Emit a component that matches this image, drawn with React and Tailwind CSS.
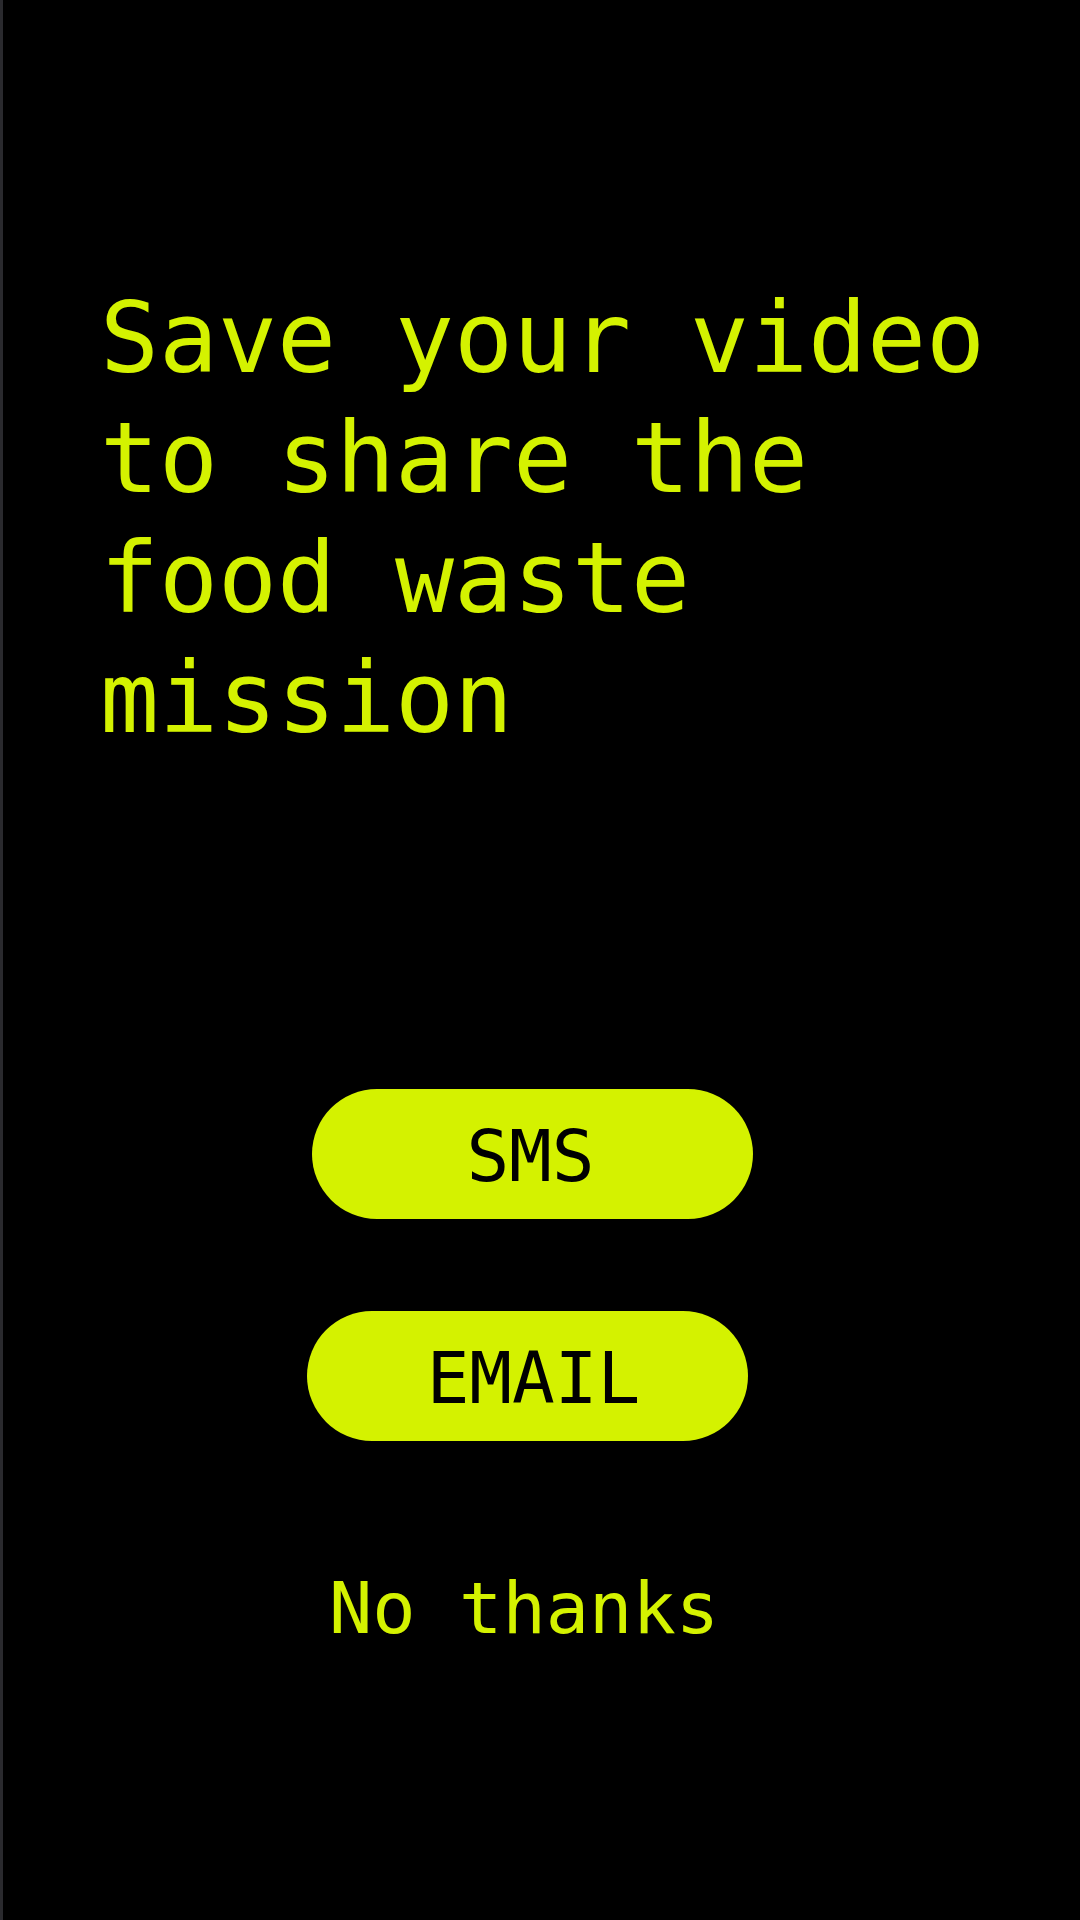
export default function App() {
  const mono = { fontFamily: '"DejaVu Sans Mono", "Liberation Mono", monospace' };
  return (
    <div className="w-[1080px] h-[1920px] bg-black border-l-[3px] border-[#2a2a2e] overflow-hidden flex flex-col" style={mono}>
      <h1 className="mt-[278px] ml-[97px] text-[98px] leading-[120px] font-normal text-[#d4f200]">
        Save your video<br />to share the<br />food waste<br />mission
      </h1>
      <button className="mt-[331px] ml-[309px] w-[441px] h-[130px] rounded-full bg-[#d4f200] text-black text-[71px] flex items-center justify-center pt-[6px] pr-[4px]">
        SMS
      </button>
      <button className="mt-[92px] ml-[304px] w-[441px] h-[130px] rounded-full bg-[#d4f200] text-black text-[71px] flex items-center justify-center pt-[6px] pl-[12px]">
        EMAIL
      </button>
      <div className="mt-[125px] ml-[326px] text-[72px] leading-[84px] text-[#d4f200]">
        No thanks
      </div>
    </div>
  );
}
